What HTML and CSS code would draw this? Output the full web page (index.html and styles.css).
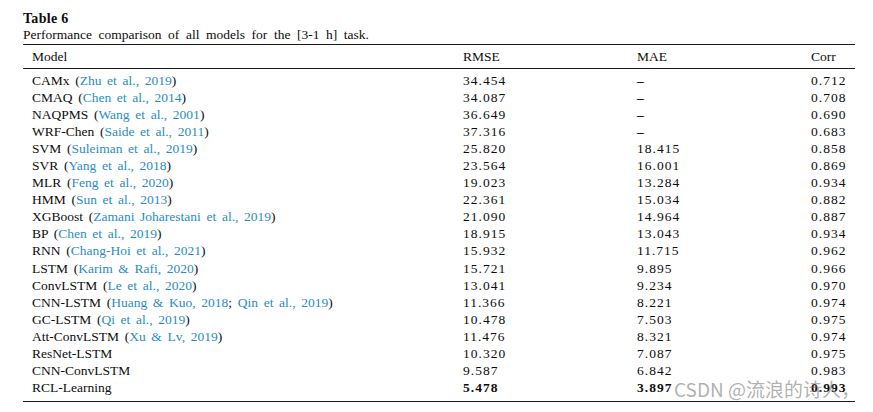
FILE: index.html
```html
<!DOCTYPE html>
<html>
<head>
<meta charset="utf-8">
<link rel="stylesheet" href="styles.css">
</head>
<body>
<div class="page">
  <div class="title">Table 6</div>
  <div class="caption">Performance comparison of all models for the [3-1 h] task.</div>
  <div class="table">
    <div class="head">
      <div class="c1">Model</div><div class="c2">RMSE</div><div class="c3">MAE</div><div class="c4">Corr</div>
    </div>
    <div class="body">
      <div class="row"><div class="c1">CAMx <span class="ref">(<a>Zhu et al., 2019</a>)</span></div><div class="c2">34.454</div><div class="c3"><span class="dash">–</span></div><div class="c4">0.712</div></div>
      <div class="row"><div class="c1">CMAQ <span class="ref">(<a>Chen et al., 2014</a>)</span></div><div class="c2">34.087</div><div class="c3"><span class="dash">–</span></div><div class="c4">0.708</div></div>
      <div class="row"><div class="c1">NAQPMS <span class="ref">(<a>Wang et al., 2001</a>)</span></div><div class="c2">36.649</div><div class="c3"><span class="dash">–</span></div><div class="c4">0.690</div></div>
      <div class="row"><div class="c1">WRF-Chen <span class="ref">(<a>Saide et al., 2011</a>)</span></div><div class="c2">37.316</div><div class="c3"><span class="dash">–</span></div><div class="c4">0.683</div></div>
      <div class="row"><div class="c1">SVM <span class="ref">(<a>Suleiman et al., 2019</a>)</span></div><div class="c2">25.820</div><div class="c3">18.415</div><div class="c4">0.858</div></div>
      <div class="row"><div class="c1">SVR <span class="ref">(<a>Yang et al., 2018</a>)</span></div><div class="c2">23.564</div><div class="c3">16.001</div><div class="c4">0.869</div></div>
      <div class="row"><div class="c1">MLR <span class="ref">(<a>Feng et al., 2020</a>)</span></div><div class="c2">19.023</div><div class="c3">13.284</div><div class="c4">0.934</div></div>
      <div class="row"><div class="c1">HMM <span class="ref">(<a>Sun et al., 2013</a>)</span></div><div class="c2">22.361</div><div class="c3">15.034</div><div class="c4">0.882</div></div>
      <div class="row"><div class="c1">XGBoost <span class="ref">(<a>Zamani Joharestani et al., 2019</a>)</span></div><div class="c2">21.090</div><div class="c3">14.964</div><div class="c4">0.887</div></div>
      <div class="row"><div class="c1">BP <span class="ref">(<a>Chen et al., 2019</a>)</span></div><div class="c2">18.915</div><div class="c3">13.043</div><div class="c4">0.934</div></div>
      <div class="row"><div class="c1">RNN <span class="ref">(<a>Chang-Hoi et al., 2021</a>)</span></div><div class="c2">15.932</div><div class="c3">11.715</div><div class="c4">0.962</div></div>
      <div class="row"><div class="c1">LSTM <span class="ref">(<a>Karim &amp; Rafi, 2020</a>)</span></div><div class="c2">15.721</div><div class="c3">9.895</div><div class="c4">0.966</div></div>
      <div class="row"><div class="c1">ConvLSTM <span class="ref">(<a>Le et al., 2020</a>)</span></div><div class="c2">13.041</div><div class="c3">9.234</div><div class="c4">0.970</div></div>
      <div class="row"><div class="c1">CNN-LSTM <span class="ref">(<a>Huang &amp; Kuo, 2018</a>; <a>Qin et al., 2019</a>)</span></div><div class="c2">11.366</div><div class="c3">8.221</div><div class="c4">0.974</div></div>
      <div class="row"><div class="c1">GC-LSTM <span class="ref">(<a>Qi et al., 2019</a>)</span></div><div class="c2">10.478</div><div class="c3">7.503</div><div class="c4">0.975</div></div>
      <div class="row"><div class="c1">Att-ConvLSTM <span class="ref">(<a>Xu &amp; Lv, 2019</a>)</span></div><div class="c2">11.476</div><div class="c3">8.321</div><div class="c4">0.974</div></div>
      <div class="row"><div class="c1">ResNet-LSTM</div><div class="c2">10.320</div><div class="c3">7.087</div><div class="c4">0.975</div></div>
      <div class="row"><div class="c1">CNN-ConvLSTM</div><div class="c2">9.587</div><div class="c3">6.842</div><div class="c4">0.983</div></div>
      <div class="row best"><div class="c1">RCL-Learning</div><div class="c2"><b>5.478</b></div><div class="c3"><b>3.897</b></div><div class="c4"><b>0.993</b></div></div>
    </div>
  </div>
  <div class="watermark">CSDN @流浪的诗人，</div>
</div>
</body>
</html>
```
FILE: styles.css
```css
html, body {
  margin: 0;
  padding: 0;
  background: #ffffff;
}
.page {
  position: relative;
  width: 873px;
  height: 412px;
  padding: 11px 0 0 23px;
  box-sizing: border-box;
  font-family: "Liberation Serif", "Times New Roman", serif;
  font-size: 13.5px;
  color: #0d0d0d;
}
.title {
  font-weight: bold;
  font-size: 14px;
  line-height: 15px;
  letter-spacing: 0.3px;
}
.caption {
  line-height: 17px;
  word-spacing: 3.2px;
}
.table {
  width: 832px;
  border-top: 1.5px solid #1a1a1a;
  border-bottom: 1.5px solid #1a1a1a;
  margin-top: 1px;
}
.head, .row {
  display: grid;
  grid-template-columns: 440px 174px 174px 1fr;
}
.head {
  height: 23px;
  align-items: center;
  border-bottom: 1.2px solid #1a1a1a;
}
.body {
  padding: 3px 0 4px;
}
.row {
  height: 17.1px;
  align-items: center;
}
.c1 {
  padding-left: 9px;
  white-space: nowrap;
  word-spacing: 2.3px;
}
.row .c2, .row .c3, .row .c4 {
  letter-spacing: 1px;
}
.ref a {
  color: #2a8cc4;
}
.dash {
  font-weight: bold;
}
.best b {
  font-weight: bold;
}
.watermark {
  position: absolute;
  left: 674px;
  top: 375px;
  font-family: "Noto Sans CJK SC", "Noto Sans", sans-serif;
  font-size: 19px;
  color: rgba(110, 110, 110, 0.55);
  white-space: nowrap;
}
```
